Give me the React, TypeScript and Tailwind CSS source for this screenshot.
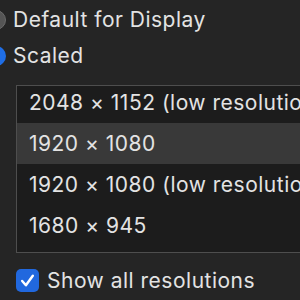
import React from 'react'

const rows = [
  { label: '2048 × 1152 (low resolution)', selected: false },
  { label: '1920 × 1080', selected: true },
  { label: '1920 × 1080 (low resolution)', selected: false },
  { label: '1680 × 945', selected: false },
]

function Radio({ checked, label }: { checked: boolean; label: string }) {
  return (
    <div className="flex h-[36px] items-center gap-[7px]">
      {checked ? (
        <div className="-ml-[14px] flex h-[20px] w-[20px] shrink-0 items-center justify-center rounded-full bg-[#1f6ee6]">
          <div className="h-[7px] w-[7px] rounded-full bg-white" />
        </div>
      ) : (
        <div className="-ml-[14px] h-[20px] w-[20px] shrink-0 rounded-full border border-[#6a6a6a] bg-[#555555]" />
      )}
      <span className="whitespace-nowrap">{label}</span>
    </div>
  )
}

export default function App() {
  return (
    <div
      className="h-[300px] w-[300px] overflow-hidden bg-[#252525] pt-[2px] text-[21px] tracking-[0.5px] text-[#e3e3e3]"
      style={{ fontFamily: 'Inter, "Liberation Sans", sans-serif' }}
    >
      <Radio checked={false} label="Default for Display" />
      <Radio checked={true} label="Scaled" />

      {/* Resolution list */}
      <div className="ml-[16px] mt-[11px] h-[168px] w-[320px] overflow-hidden border border-[#4e4e4e] bg-[#1c1c1c]">
        <div className="-mt-[4px]">
          {rows.map((r, i) => (
            <div
              key={i}
              className={
                r.selected
                  ? 'flex h-[41px] items-center whitespace-nowrap bg-[#393939] pl-[12px]'
                  : 'flex h-[41px] items-center whitespace-nowrap pl-[12px]'
              }
            >
              {r.label}
            </div>
          ))}
        </div>
      </div>

      {/* Checkbox */}
      <div className="ml-[16px] mt-[12px] flex items-center gap-[8px]">
        <div className="flex h-[23px] w-[23px] shrink-0 items-center justify-center rounded-[5px] bg-[#2168de]">
          <svg width="17" height="17" viewBox="0 0 16 16" fill="none">
            <path d="M3 8.5 L6.5 12.5 L13 3.5" stroke="white" strokeWidth="2.3" strokeLinecap="round" strokeLinejoin="round" />
          </svg>
        </div>
        <span className="whitespace-nowrap">Show all resolutions</span>
      </div>
    </div>
  )
}
